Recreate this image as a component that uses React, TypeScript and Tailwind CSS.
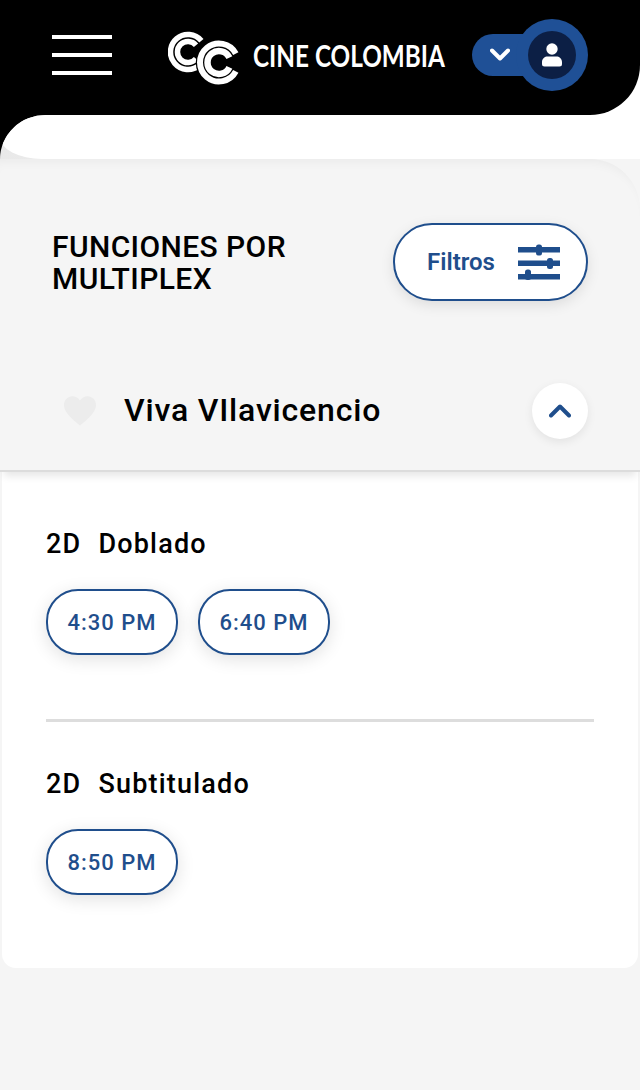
const blue = "#1f4e8c";

function Logo() {
  return (
    <svg width="73" height="54" viewBox="0 0 73 54" fill="none" className="shrink-0">
      <path d="M33.4 9.75 A17.5 17.5 0 1 0 31.25 34.4" stroke="#fff" strokeWidth="5.5" />
      <path d="M28 14.25 A10.5 10.5 0 1 0 28 27.75" stroke="#fff" strokeWidth="5.5" />
      <path d="M67.8 22.6 A19 19 0 1 0 67.8 40.4" stroke="#000" strokeWidth="8.5" />
      <path d="M67.8 22.6 A19 19 0 1 0 67.8 40.4" stroke="#fff" strokeWidth="6" />
      <path d="M61.4 26.6 A11.5 11.5 0 1 0 61.4 36.4" stroke="#fff" strokeWidth="6.5" />
    </svg>
  );
}

function UserWidget() {
  return (
    <div className="flex items-center">
      <div className="flex h-[42px] w-[74px] -mr-[30px] items-center rounded-l-[21px] bg-[#1f5096] pl-[18px]">
        <svg width="20" height="14" viewBox="0 0 20 14" fill="none">
          <path d="M2 2.5 L10 10.5 L18 2.5" stroke="#fff" strokeWidth="4" strokeLinecap="round" strokeLinejoin="round" />
        </svg>
      </div>
      <div className="relative flex h-[72px] w-[72px] items-center justify-center rounded-full bg-[#1f5096]">
        <div className="flex h-[48px] w-[48px] items-center justify-center rounded-full bg-[#0c1f45]">
          <svg width="20" height="24" viewBox="0 0 20 24" fill="#fff">
            <circle cx="10" cy="6" r="5.7" />
            <path d="M0 21 V19 C0 15.5 3 13.5 5.5 13.5 H14.5 C17 13.5 20 15.5 20 19 V21 A2.5 2.5 0 0 1 17.5 23.5 H2.5 A2.5 2.5 0 0 1 0 21 Z" />
          </svg>
        </div>
      </div>
    </div>
  );
}

function Sliders() {
  return (
    <svg width="42" height="36" viewBox="0 0 42 36" fill={blue}>
      <rect x="0" y="3" width="42" height="5.5" />
      <rect x="0" y="16.5" width="42" height="5.5" />
      <rect x="0" y="30" width="42" height="5.5" />
      <rect x="18" y="0.5" width="6" height="11" rx="2.5" />
      <rect x="29" y="14" width="6" height="11" rx="2.5" />
      <rect x="7" y="25.5" width="6" height="10.5" rx="2.5" />
    </svg>
  );
}

function Time({ label }: { label: string }) {
  return (
    <button className="flex h-[66px] w-[132px] items-center justify-center rounded-[32px] border-2 border-[#1f4e8c] bg-white text-[22px] font-medium tracking-[1px] text-[#1f4e8c] shadow-[0_4px_18px_rgba(0,0,0,0.12)]">
      {label}
    </button>
  );
}

function Heading({ a, b }: { a: string; b: string }) {
  return (
    <div className="flex gap-[17px] pt-[2px] text-[27px] leading-[30px] font-medium tracking-[1.2px] text-black">
      <span>{a}</span>
      <span>{b}</span>
    </div>
  );
}

export default function App() {
  return (
    <div className="flex h-[1090px] w-[640px] flex-col overflow-hidden bg-[#f5f5f5] font-['Roboto',sans-serif]">
      <header className="relative z-10 flex h-[115px] items-center rounded-br-[50px] bg-black pr-[52px] pb-[5px] pl-[52px]">
        <div className="flex w-[60px] flex-col gap-[14px]">
          <div className="h-[4px] bg-white" />
          <div className="h-[4px] bg-white" />
          <div className="h-[4px] bg-white" />
        </div>
        <div className="mt-[5px] ml-[56px]">
          <Logo />
        </div>
        <div className="mt-[4px] ml-[12px] w-[191px] shrink-0">
          <span className="inline-block origin-left scale-x-[0.81] text-[30px] leading-none font-bold whitespace-nowrap text-white font-['Lato',sans-serif]">
            CINE COLOMBIA
          </span>
        </div>
        <div className="ml-auto">
          <UserWidget />
        </div>
      </header>

      <div className="-mt-[50px] h-[94px] shrink-0 bg-[linear-gradient(to_right,#000_50%,#fff_50%)] pt-[50px]">
        <div className="h-[44px] overflow-hidden rounded-tl-[50px_48px] bg-[linear-gradient(to_right,#e9e9e9_0,#f3f3f3_50%,#fff_50%)]">
          <div className="h-[44px] rounded-bl-[42px_22px] bg-white" />
        </div>
      </div>

      <main className="flex-1 rounded-tr-[50px] bg-[#f5f5f5] shadow-[inset_0_10px_12px_-8px_rgba(0,0,0,0.05)]">
        <div className="flex items-center justify-between px-[52px] pt-[64px]">
          <h1 className="pt-[2px] text-[30px] leading-[32px] font-medium tracking-[0.4px] text-black">
            FUNCIONES POR
            <br />
            MULTIPLEX
          </h1>
          <button className="flex h-[78px] w-[195px] items-center justify-between rounded-[39px] border-2 border-[#1f4e8c] bg-white pr-[26px] pl-[32px] text-[24px] font-semibold text-[#1f4e8c] shadow-[0_4px_14px_rgba(0,0,0,0.1)]">
            Filtros
            <Sliders />
          </button>
        </div>

        <div className="relative z-10 mt-[82px] flex items-center border-b-2 border-[#dcdcdc] bg-[#f5f5f5] pr-[52px] pb-[31px] pl-[64px] shadow-[0_8px_8px_-4px_rgba(0,0,0,0.1)]">
          <svg width="32" height="30" viewBox="0 0 24 22" fill="#ececec" className="shrink-0">
            <path d="M12 22 C10 19.8 0 13.5 0 6.5 C0 2.8 2.8 0 6.3 0 C8.6 0 10.8 1.2 12 3.2 C13.2 1.2 15.4 0 17.7 0 C21.2 0 24 2.8 24 6.5 C24 13.5 14 19.8 12 22 Z" />
          </svg>
          <span className="-mt-[2px] ml-[28px] text-[32px] leading-[40px] font-medium tracking-[0.82px] text-black">Viva VIlavicencio</span>
          <button className="ml-auto flex h-[56px] w-[56px] items-center justify-center rounded-full bg-white shadow-[0_3px_10px_rgba(0,0,0,0.08)]">
            <svg width="22" height="14" viewBox="0 0 22 14" fill="none">
              <path d="M2 11.5 L11 2.5 L20 11.5" stroke={blue} strokeWidth="4" strokeLinecap="round" strokeLinejoin="round" />
            </svg>
          </button>
        </div>

        <section className="mx-[2px] rounded-b-[14px] bg-white px-[44px] pt-[55px] pb-[73px]">
          <Heading a="2D" b="Doblado" />
          <div className="mt-[30px] flex gap-[20px]">
            <Time label="4:30 PM" />
            <Time label="6:40 PM" />
          </div>
          <div className="mt-[64px] h-[3px] bg-[#dddddd]" />
          <div className="mt-[45px]">
            <Heading a="2D" b="Subtitulado" />
          </div>
          <div className="mt-[30px] flex gap-[20px]">
            <Time label="8:50 PM" />
          </div>
        </section>
      </main>
    </div>
  );
}
